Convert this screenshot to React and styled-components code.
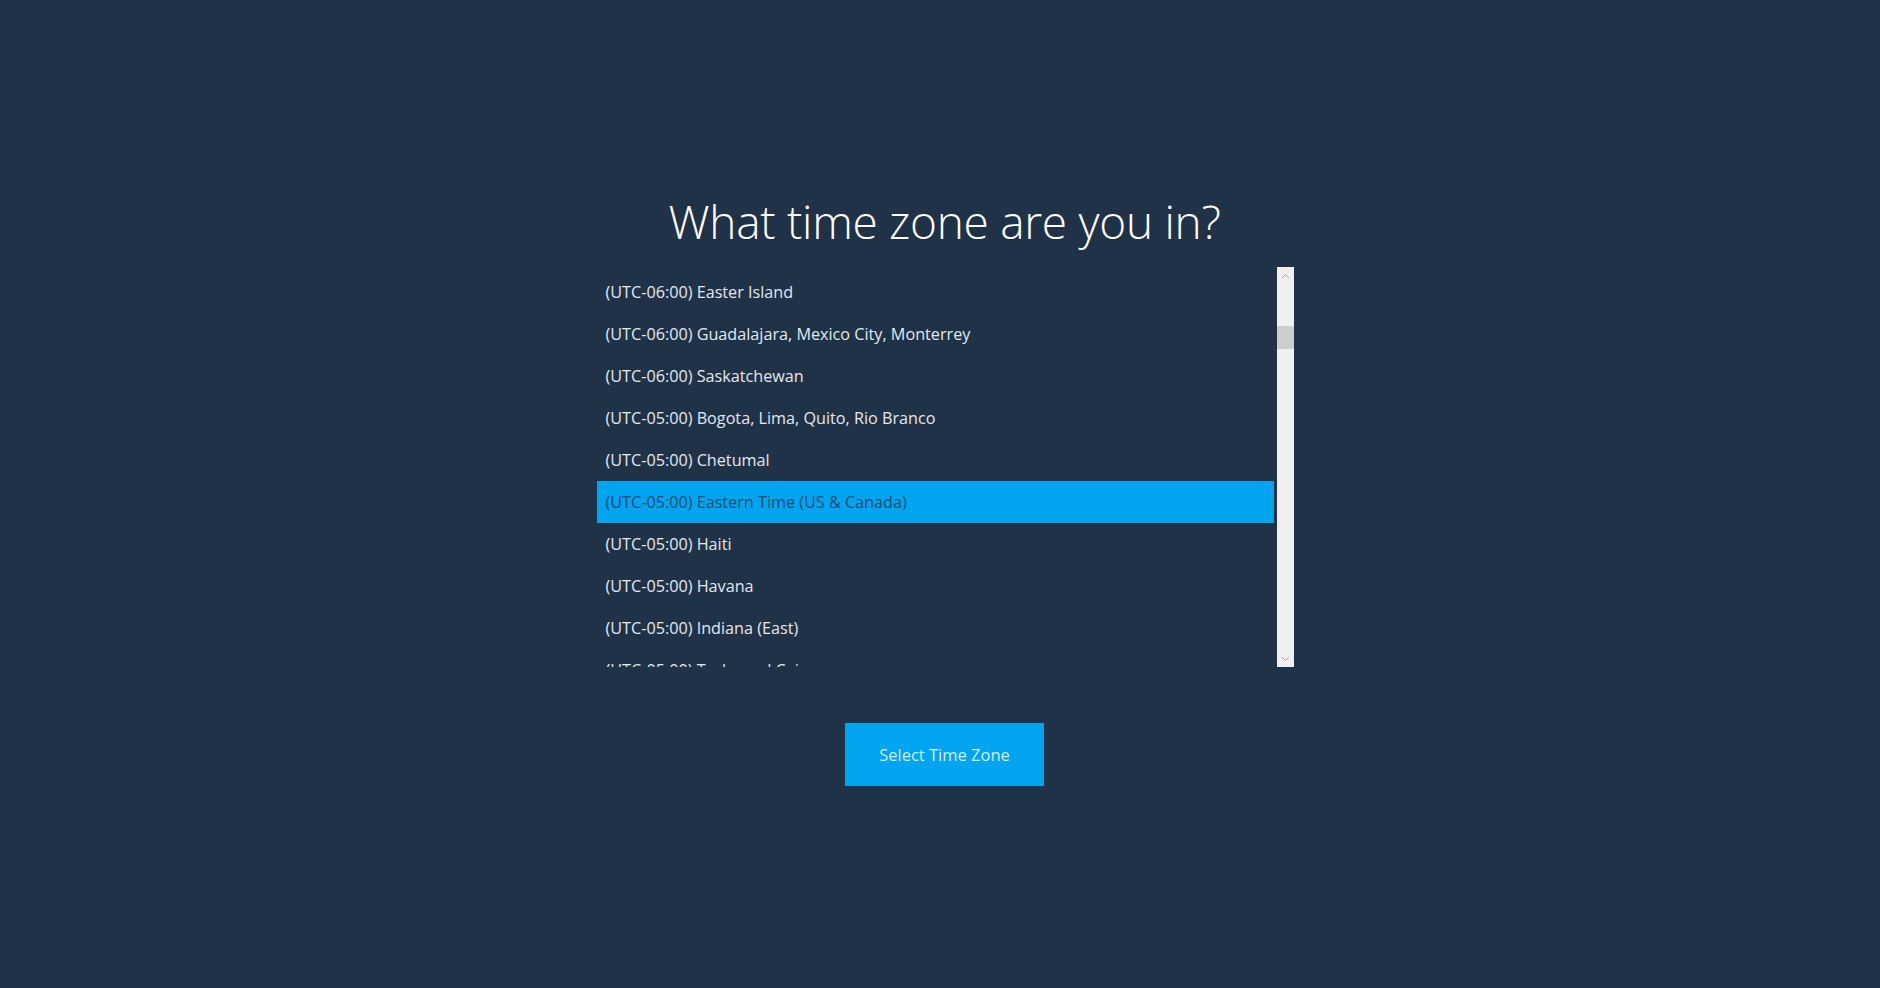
import React from "react";
import styled, { createGlobalStyle } from "styled-components";

const GlobalStyle = createGlobalStyle`
  html, body { margin: 0; padding: 0; background: #1f3248; }
  body { font-family: "Open Sans", "Noto Sans", sans-serif; }
`;

const Page = styled.div`
  width: 100%;
  height: 988px;
  box-sizing: border-box;
  display: flex;
  flex-direction: column;
  align-items: center;
  padding-top: 189px;
  padding-left: 9px;
  background: #1f3248;
`;

const Title = styled.h1`
  margin: 0;
  font-family: "Open Sans", "Noto Sans", sans-serif;
  font-weight: 300;
  font-size: 46px;
  line-height: 64px;
  color: #ffffff;
  letter-spacing: -0.3px;
`;

const ListBox = styled.div`
  margin-top: 14px;
  width: 698px;
  height: 400px;
  display: flex;
`;

const List = styled.ul`
  flex: 1;
  margin: 0;
  padding: 4px 3px 0 1px;
  list-style: none;
  overflow: hidden;
`;

const Row = styled.li`
  height: 42px;
  display: flex;
  align-items: center;
  padding-left: 9px;
  font-size: 16.2px;
  color: ${(p) => (p.$selected ? "#1d4d72" : "#e4e8ee")};
  background: ${(p) => (p.$selected ? "#00a4ef" : "transparent")};
  white-space: nowrap;
`;

const Scrollbar = styled.div`
  width: 17px;
  height: 100%;
  background: #f0f0f0;
  display: flex;
  flex-direction: column;
`;

const Arrow = styled.div`
  height: 17px;
  display: flex;
  align-items: center;
  justify-content: center;
`;

const Track = styled.div`
  flex: 1;
  display: flex;
  flex-direction: column;
`;

const Thumb = styled.div`
  margin-top: 42px;
  height: 23px;
  background: #cdcdcd;
`;

const Button = styled.button`
  margin-top: 56px;
  width: 199px;
  height: 63px;
  border: none;
  background: #00a4ef;
  color: #d4ecfb;
  font-family: "Open Sans", "Noto Sans", sans-serif;
  font-size: 16.5px;
  font-weight: 400;
  cursor: pointer;
`;

const zones = [
  "(UTC-06:00) Easter Island",
  "(UTC-06:00) Guadalajara, Mexico City, Monterrey",
  "(UTC-06:00) Saskatchewan",
  "(UTC-05:00) Bogota, Lima, Quito, Rio Branco",
  "(UTC-05:00) Chetumal",
  "(UTC-05:00) Eastern Time (US & Canada)",
  "(UTC-05:00) Haiti",
  "(UTC-05:00) Havana",
  "(UTC-05:00) Indiana (East)",
  "(UTC-05:00) Turks and Caicos",
];

const Chevron = ({ up }) => (
  <svg width="9" height="6" viewBox="0 0 9 6">
    <path
      d={up ? "M1 5 L4.5 1.5 L8 5" : "M1 1 L4.5 4.5 L8 1"}
      fill="none"
      stroke="#a3a3a3"
      strokeWidth="1"
    />
  </svg>
);

export default function App() {
  return (
    <>
      <GlobalStyle />
      <Page>
        <Title>What time zone are you in?</Title>
        <ListBox>
          <List>
            {zones.map((z, i) => (
              <Row key={z} $selected={i === 5}>
                {z}
              </Row>
            ))}
          </List>
          <Scrollbar>
            <Arrow>
              <Chevron up />
            </Arrow>
            <Track>
              <Thumb />
            </Track>
            <Arrow>
              <Chevron />
            </Arrow>
          </Scrollbar>
        </ListBox>
        <Button>Select Time Zone</Button>
      </Page>
    </>
  );
}
